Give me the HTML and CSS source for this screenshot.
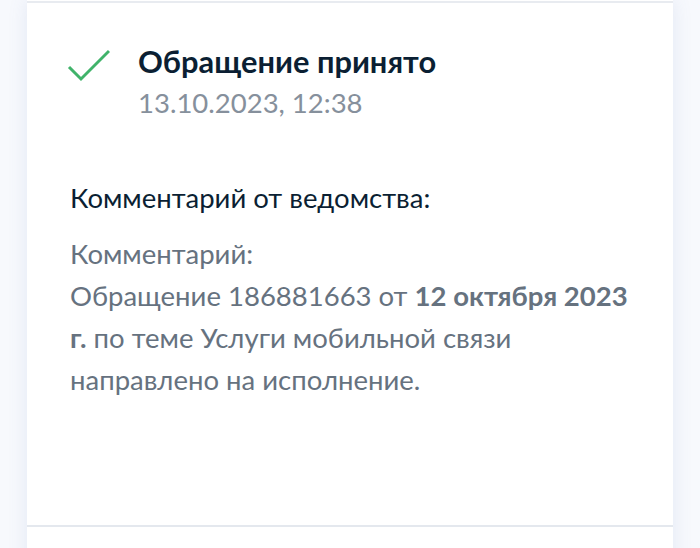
FILE: index.html
```html
<!DOCTYPE html>
<html lang="ru">
<head>
<meta charset="utf-8">
<link rel="stylesheet" href="styles.css">
</head>
<body>
<div class="list">
  <div class="card card-prev"></div>
  <div class="card card-main">
    <div class="status">
      <svg class="check" width="44" height="44" viewBox="0 0 44 44" aria-hidden="true">
        <path d="M3 23 L15 35 L43 7" fill="none" stroke="#40b36a" stroke-width="3" stroke-linecap="butt" stroke-linejoin="miter"/>
      </svg>
      <div class="status-text">
        <div class="status-title">Обращение принято</div>
        <div class="status-date">13.10.2023, 12:38</div>
      </div>
    </div>
    <div class="comment">
      <div class="comment-head">Комментарий от ведомства:</div>
      <div class="comment-body">Комментарий:<br>Обращение 186881663 от <b>12 октября 2023 г.</b> по теме Услуги мобильной связи направлено на исполнение.</div>
    </div>
  </div>
  <div class="card card-next"></div>
</div>
</body>
</html>
```

FILE: styles.css
```css
html, body {
  margin: 0;
  padding: 0;
}
body {
  background: #f7f9fd;
  font-family: Lato, "Noto Sans", sans-serif;
  height: 548px;
  overflow: hidden;
}
.list {
  margin: 0 27px;
  background: #ffffff;
  box-shadow: 0 0 18px rgba(90, 115, 180, 0.13);
}
.card {
  background: #ffffff;
  border-bottom: 2px solid #e4e8ee;
}
.card-prev {
  height: 1px;
  border-bottom-color: #e8ebf0;
}
.card-main {
  box-sizing: border-box;
  height: 524px;
  padding: 38px 43px 0 43px;
}
.card-next {
  height: 40px;
  border-bottom: none;
}
.status {
  display: flex;
  align-items: flex-start;
  gap: 28px;
}
.check {
  flex: none;
  margin-left: -4px;
  margin-top: 3px;
}
.status-title {
  font-size: 30.8px;
  line-height: 41px;
  font-weight: 700;
  color: #0b1f33;
}
.status-date {
  font-size: 27.5px;
  line-height: 41px;
  color: #86909c;
}
.comment {
  margin-top: 54px;
  font-size: 27.5px;
  line-height: 42px;
}
.comment-head {
  color: #0b1f33;
}
.comment-body {
  margin-top: 14px;
  color: #66727f;
}
.comment-body b {
  font-weight: 700;
}
```
